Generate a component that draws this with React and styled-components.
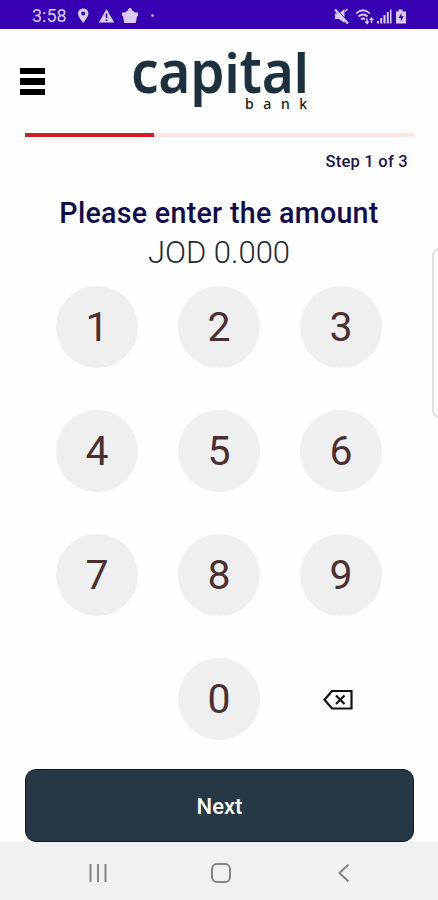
import React from 'react';
import styled, { createGlobalStyle } from 'styled-components';

const GlobalStyle = createGlobalStyle`
  * {
    box-sizing: border-box;
  }

  body {
    margin: 0;
    background: #fefefe;
    font-family: Roboto, sans-serif;
  }

  button {
    padding: 0;
    border: 0;
    background: none;
    font-family: inherit;
  }
`;

const Screen = styled.div`
  position: relative;
  display: flex;
  flex-direction: column;
  width: 438px;
  height: 900px;
  overflow: hidden;
  background: #fefefe;
`;

const StatusBar = styled.div`
  display: flex;
  justify-content: space-between;
  height: 29px;
  padding: 3px 31px 0 32px;
  background: #3700b3;
  color: #d9cdf5;
`;

const StatusGroup = styled.div`
  display: flex;
  align-items: center;
`;

const Clock = styled.span`
  width: 46px;
  font-size: 18px;
  line-height: 26px;
`;

const Header = styled.header`
  display: flex;
  height: 104px;
  padding-left: 20px;
`;

const MenuButton = styled.button`
  display: flex;
  flex-direction: column;
  gap: 4px;
  width: 25px;
  height: 27px;
  margin-top: 39px;
`;

const MenuLine = styled.span`
  width: 25px;
  height: 6.4px;
  background: #000;
`;

const Logo = styled.div`
  width: 180px;
  margin: 20px 0 0 86px;
  font-family: 'Noto Sans', sans-serif;
`;

const LogoName = styled.div`
  height: 47px;
  color: #1c303d;
  font-size: 55px;
  font-weight: 600;
  line-height: 46px;
  letter-spacing: -0.3px;
  white-space: nowrap;
`;

/* stretched from the baseline, which sits 44px down the line */
const LogoLetter = styled.span`
  display: inline-block;
  transform: scaleY(${({ $stretch }) => $stretch});
  transform-origin: 0 44px;
`;

const LogoTag = styled.div`
  padding-left: 114px;
  color: #16191c;
  font-size: 14px;
  font-weight: 500;
  line-height: 15px;
  letter-spacing: 9.6px;
  white-space: nowrap;
`;

const Progress = styled.div`
  height: 4px;
  margin: 0 24px 0 25px;
  background: #ffe4e3;
`;

const ProgressFill = styled.div`
  width: 129px;
  height: 4px;
  background: #cf1f28;
`;

const Step = styled.div`
  height: 62px;
  padding: 15px 30px 0 0;
  color: #1c1650;
  font-size: 16.5px;
  font-weight: 500;
  line-height: 20px;
  letter-spacing: 0.25px;
  text-align: right;
`;

const Title = styled.h1`
  margin: -4px 0 0;
  color: #100a52;
  font-size: 28.6px;
  font-weight: 500;
  line-height: 36px;
  letter-spacing: 0.3px;
  text-align: center;
`;

const Amount = styled.div`
  height: 55px;
  color: #1d2a33;
  font-size: 31px;
  font-weight: 300;
  line-height: 43px;
  text-align: center;
`;

const Keypad = styled.div`
  display: grid;
  grid-template-columns: repeat(3, 82px);
  grid-template-rows: repeat(4, 82px);
  gap: 42px 40px;
  margin-left: 56px;
`;

const Key = styled.button`
  grid-column: ${({ $column }) => $column || 'auto'};
  border-radius: 50%;
  background: ${({ $plain }) => ($plain ? 'none' : '#efefef')};
  color: #4a3034;
  font-size: 41px;
  font-weight: 400;
  line-height: 82px;
`;

const EraseIcon = styled.svg`
  display: block;
  margin: 2px 0 0 23px;
`;

const NextButton = styled.button`
  height: 73px;
  margin: 29px 24px 0 25px;
  padding: 2px 0 0;
  border: 1.5px solid #0c1d30;
  border-radius: 11px;
  background: #263845;
  color: #fff;
  font-size: 22px;
  font-weight: 500;
`;

const NavBar = styled.nav`
  display: flex;
  align-items: center;
  height: 58px;
  padding: 4px 0 0 88px;
  background: #f1f1f1;
`;

const NavIcon = styled.svg`
  margin-right: ${({ $gap }) => $gap || 0}px;
  fill: none;
  stroke: #858585;
  stroke-width: 2;
`;

const EdgePanel = styled.div`
  position: absolute;
  top: 248px;
  right: -10px;
  width: 16px;
  height: 170px;
  border: 2px solid #dedede;
  border-radius: 9px;
  background: #fefefe;
`;

const keys = ['1', '2', '3', '4', '5', '6', '7', '8', '9', '0'];

const logoLetters = [
  ['c', 1.07],
  ['a', 1.07],
  ['p', 1.07],
  ['i', 0.97],
  ['t', 1.12],
  ['a', 1.07],
  ['l', 0.97],
];

const LeftStatusIcons = () => (
  <svg width="80" height="20" viewBox="0 0 80 20" fill="currentColor">
    <path
      fillRule="evenodd"
      d="M5.2 2.500C2.200 2.500 0 4.700 0 7.500c0 3.600 5.200 9.400 5.200 9.400s5.200-5.800 5.200-9.400c0-2.800-2.200-5-5.200-5zm0 3a2 2 0 1 1 0 4 2 2 0 0 1 0-4z"
    />
    <path fillRule="evenodd" d="M28.500 3 36.200 16.500H20.800zM27.700 7.500V12h1.700V7.500zm0 5.700v1.700h1.700v-1.700z" />
    <path d="M44 6.500h16v3.800h-1L57.800 17H46.200L45 10.300h-1z" />
    <path d="M47 7.500c.5-2 2.500-3.500 5-3.500s4.500 1.500 5 3.500z" />
    <circle cx="52" cy="3.800" r="1.800" />
    <circle cx="74.500" cy="9.500" r="1.200" />
  </svg>
);

const RightStatusIcons = () => (
  <svg width="74" height="22" viewBox="0 0 74 22" fill="currentColor">
    {/* muted speaker */}
    <path d="M2 8.500h4L11.500 4v14L6 14H2z" />
    <path d="m12 6.500 2.500-2.500" stroke="currentColor" strokeWidth="1.500" />
    <path d="m3.500 4 12 13" stroke="#3700b3" strokeWidth="1" />
    <path d="m2 4.500 13 14" stroke="currentColor" strokeWidth="2.200" />
    {/* wifi */}
    <g fill="none" stroke="currentColor" strokeWidth="1.700">
      <path d="M23 8.500q7-6.500 14 0M25.500 11.500q4.500-4 9 0M28 14.500q2-2 4 0" />
      <path d="M34 13.500v5m-1.700-2 1.700 2 1.700-2M38.500 18v-5m-1.700 2 1.700-2 1.700 2" strokeWidth="1.400" />
    </g>
    {/* signal */}
    <path d="M44 16h2v2.500h-2zM47.200 13h2v5.500h-2zM50.500 10h2v8.500h-2zM53.800 7h2v11.500h-2zM57 4.500h1.500v14H57z" />
    {/* charging battery */}
    <path d="M65.500 4.500h4v2H73v12H63v-12h2.500z" />
    <path d="m68.500 8-3 5h2.300v3.500l3-5.200h-2.300z" fill="#3700b3" />
  </svg>
);

const App = () => {
  return (
    <>
      <GlobalStyle />
      <Screen>
        <StatusBar>
          <StatusGroup>
            <Clock>3:58</Clock>
            <LeftStatusIcons />
          </StatusGroup>
          <StatusGroup>
            <RightStatusIcons />
          </StatusGroup>
        </StatusBar>
        <Header>
          <MenuButton aria-label="Menu">
            <MenuLine />
            <MenuLine />
            <MenuLine />
          </MenuButton>
          <Logo>
            <LogoName>
              {logoLetters.map(([letter, stretch], index) => (
                <LogoLetter key={index} $stretch={stretch}>
                  {letter}
                </LogoLetter>
              ))}
            </LogoName>
            <LogoTag>bank</LogoTag>
          </Logo>
        </Header>
        <Progress>
          <ProgressFill />
        </Progress>
        <Step>Step 1 of 3</Step>
        <Title>Please enter the amount</Title>
        <Amount>JOD 0.000</Amount>
        <Keypad>
          {keys.map((key) => (
            <Key key={key} $column={key === '0' ? 2 : undefined}>
              {key}
            </Key>
          ))}
          <Key $plain aria-label="Erase">
            <EraseIcon width="30" height="20" viewBox="0 0 30 20" fill="none" stroke="#111" strokeWidth="2.200">
              <path d="M9 1h19.500v17.500H9L1.500 9.700z" />
              <path d="m13 5.500 8.500 8.500m0-8.500L13 14" />
            </EraseIcon>
          </Key>
        </Keypad>
        <NextButton>Next</NextButton>
        <NavBar>
          <NavIcon $gap={103} width="20" height="20" viewBox="0 0 20 20">
            <path d="M2.500 1v18M10 1v18M17.500 1v18" />
          </NavIcon>
          <NavIcon $gap={107} width="20" height="20" viewBox="0 0 20 20">
            <rect x="1" y="1" width="18" height="18" rx="5" />
          </NavIcon>
          <NavIcon width="12" height="20" viewBox="0 0 12 20">
            <path d="M10.500 1.500 1.500 10l9 8.500" />
          </NavIcon>
        </NavBar>
        <EdgePanel />
      </Screen>
    </>
  );
};

export default App;
